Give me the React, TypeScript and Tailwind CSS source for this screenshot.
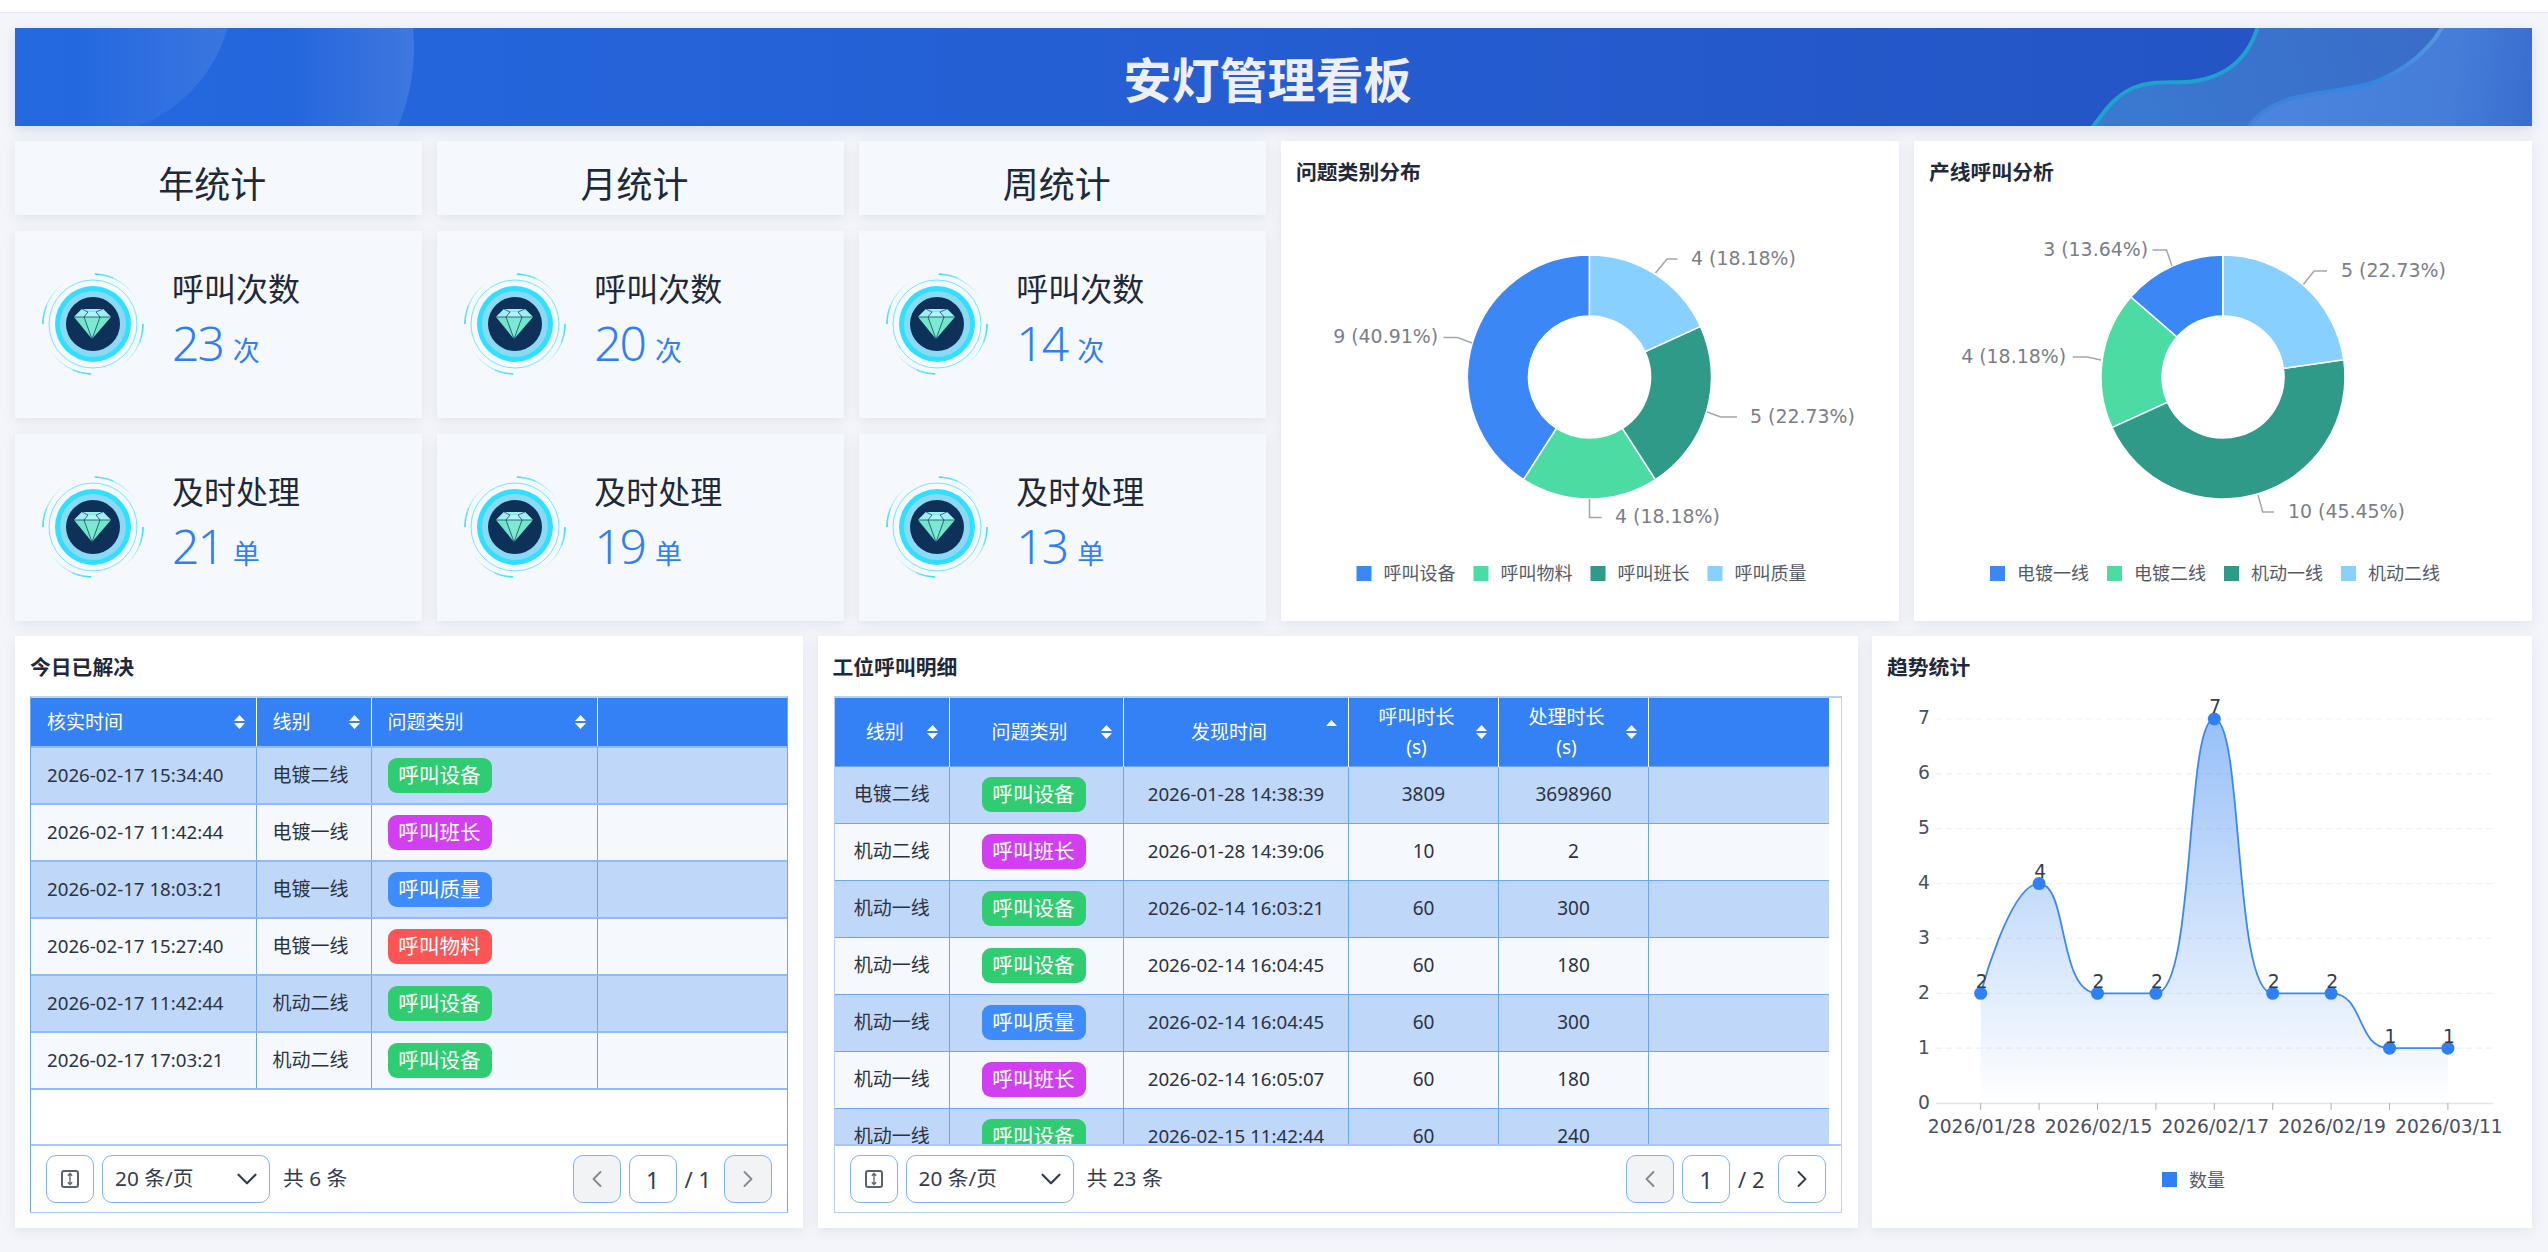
import React from 'react';
import { ChevronDown, ChevronLeft, ChevronRight } from 'lucide-react';

const CHART_FONT = '"DejaVu Sans", sans-serif';
const CJK_FONT = '"Noto Sans", "Noto Sans CJK SC", sans-serif';

type Tag = '呼叫设备' | '呼叫班长' | '呼叫质量' | '呼叫物料';

const TAG_COLORS: Record<Tag, string> = {
  呼叫设备: 'bg-[#2fcc71]',
  呼叫班长: 'bg-[#d13ff0]',
  呼叫质量: 'bg-[#3e8cfb]',
  呼叫物料: 'bg-[#fb5555]',
};

const SOLVED: [string, string, Tag][] = [
  ['2026-02-17 15:34:40', '电镀二线', '呼叫设备'],
  ['2026-02-17 11:42:44', '电镀一线', '呼叫班长'],
  ['2026-02-17 18:03:21', '电镀一线', '呼叫质量'],
  ['2026-02-17 15:27:40', '电镀一线', '呼叫物料'],
  ['2026-02-17 11:42:44', '机动二线', '呼叫设备'],
  ['2026-02-17 17:03:21', '机动二线', '呼叫设备'],
];

const CALLS: [string, Tag, string, number, number][] = [
  ['电镀二线', '呼叫设备', '2026-01-28 14:38:39', 3809, 3698960],
  ['机动二线', '呼叫班长', '2026-01-28 14:39:06', 10, 2],
  ['机动一线', '呼叫设备', '2026-02-14 16:03:21', 60, 300],
  ['机动一线', '呼叫设备', '2026-02-14 16:04:45', 60, 180],
  ['机动一线', '呼叫质量', '2026-02-14 16:04:45', 60, 300],
  ['机动一线', '呼叫班长', '2026-02-14 16:05:07', 60, 180],
  ['机动一线', '呼叫设备', '2026-02-15 11:42:44', 60, 240],
];

const STATS = [
  { title: '年统计', calls: 23, handled: 21 },
  { title: '月统计', calls: 20, handled: 19 },
  { title: '周统计', calls: 14, handled: 13 },
];

function polar(cx: number, cy: number, r: number, deg: number) {
  const a = ((deg - 90) * Math.PI) / 180;
  return [cx + r * Math.cos(a), cy + r * Math.sin(a)];
}

function arcPath(cx: number, cy: number, r: number, from: number, to: number) {
  const [x0, y0] = polar(cx, cy, r, from);
  const [x1, y1] = polar(cx, cy, r, to);
  return `M${x0} ${y0}A${r} ${r} 0 ${to - from > 180 ? 1 : 0} 1 ${x1} ${y1}`;
}

function DiamondBadge() {
  const sweeps = [2, 90, 182, 270];
  return (
    <svg viewBox="0 0 104 104" className="w-[104px] h-[104px] shrink-0">
      {sweeps.map((start) =>
        [0, 1, 2, 3, 4, 5, 6, 7, 8, 9].map((i) => (
          <path
            key={`${start}-${i}`}
            d={arcPath(52, 52, 50, start + i * 5.5, start + (i + 1) * 5.5)}
            fill="none"
            stroke="#35dcff"
            strokeWidth={i < 4 ? 1.6 : 1}
            opacity={1 - i * 0.1}
          />
        )),
      )}
      <circle cx="52" cy="52" r="44" fill="none" stroke="#35dcff" strokeWidth="0.7" />
      <circle cx="52" cy="52" r="38" fill="#2fe0ff" />
      <circle cx="52" cy="52" r="33" fill="#8bd9f3" />
      <circle cx="52" cy="52" r="27" fill="#0d3158" />
      <path d="M41 37H62L70 45L51 67L33 45Z" fill="#71e6c9" />
      <path d="M41 37H62L70 45H33Z" fill="#a0eef5" />
      <path d="M43 45L51 67L59 45L55 39H47Z" fill="#7ce9d3" />
      <path d="M47 40H55L59 45H43Z" fill="#aef5fb" />
      <path d="M33 45H70M41 37L47 40M62 37L55 40M43 45L51 67M59 45L51 67M47 40L43 45M55 40L59 45" fill="none" stroke="#0d3158" strokeWidth="0.7" />
    </svg>
  );
}

function StatCard({ label, value, unit }: { label: string; value: number; unit: string }) {
  return (
    <div className="bg-[#f5f9fe] shadow-[0_3px_12px_rgba(70,80,120,0.1)] flex items-center pl-[26px] gap-[27px]">
      <DiamondBadge />
      <div className="flex flex-col mb-[5px]">
        <div className="text-[32px] leading-[44px] text-[#1f2937]">{label}</div>
        <div className="flex items-baseline gap-[10px] text-[#2f7ff3] leading-[50px] mt-[7px]">
          <span className="text-[48px] font-light tracking-[-2px]">{value}</span>
          <span className="text-[27px]">{unit}</span>
        </div>
      </div>
    </div>
  );
}

type Slice = { value: number; color: string };
type PieLabel = { text: string; x: number; y: number; anchor: 'start' | 'end'; leader: string };

function Donut({ x, cx, slices, labels, legend }: { x: number; cx: number; slices: Slice[]; labels: PieLabel[]; legend: string[] }) {
  const cy = 377;
  const total = slices.reduce((s, d) => s + d.value, 0);
  let end = 360;
  const legendStart = cx - 233;
  return (
    <svg viewBox={`${x} 201 618 420`} className="w-[618px] h-[420px]">
      {slices.map((s) => {
        const start = end - (s.value / total) * 360;
        const [ax, ay] = polar(cx, cy, 122, start);
        const [bx, by] = polar(cx, cy, 122, end);
        const [ix, iy] = polar(cx, cy, 61, end);
        const [jx, jy] = polar(cx, cy, 61, start);
        const large = end - start > 180 ? 1 : 0;
        const d = `M${ax} ${ay}A122 122 0 ${large} 1 ${bx} ${by}L${ix} ${iy}A61 61 0 ${large} 0 ${jx} ${jy}Z`;
        end = start;
        return <path key={s.color} d={d} fill={s.color} stroke="#fff" strokeWidth="1.5" />;
      })}
      {labels.map((l) => (
        <g key={l.text + l.x}>
          <polyline points={l.leader} fill="none" stroke="#a3a6ad" strokeWidth="1.5" />
          <text x={l.x} y={l.y} textAnchor={l.anchor} dominantBaseline="central" fontSize="18.9" fill="#7b7e86" fontFamily={CHART_FONT}>
            {l.text}
          </text>
        </g>
      ))}
      {legend.map((name, i) => (
        <g key={name}>
          <rect x={legendStart + i * 117} y={566} width="15" height="15" fill={slices[i].color} />
          <text x={legendStart + i * 117 + 27} y={573} dominantBaseline="central" fontSize="18" fill="#555b66" fontFamily={CJK_FONT}>
            {name}
          </text>
        </g>
      ))}
    </svg>
  );
}

const VALUES = [2, 4, 2, 2, 7, 2, 2, 1, 1];
const STEP = 58.4;
const px = (i: number) => 1980.7 + i * STEP;
const py = (v: number) => 1103 - v * 54.86;

// echarts style smooth line, with the long handles off a flat run shortened to fit the picture
function smoothPath(pts: number[][]) {
  const clamp = (v: number, a: number, b: number) => Math.min(Math.max(a, b), Math.max(Math.min(a, b), v));
  const maxHandle = STEP * 0.68;
  const cps: number[][][] = pts.map((p, i) => {
    const prev = pts[i - 1] ?? p;
    const next = pts[i + 1] ?? p;
    const lenP = Math.hypot(p[0] - prev[0], p[1] - prev[1]);
    const lenN = Math.hypot(p[0] - next[0], p[1] - next[1]);
    if (!lenP || !lenN) return [p, p];
    let vx = (next[0] - prev[0]) * 0.5;
    let vy = (next[1] - prev[1]) * 0.5;
    const ratio = lenN / (lenP + lenN);
    let nx = clamp(p[0] + vx * ratio, p[0], next[0]);
    let ny = clamp(p[1] + vy * ratio, p[1], next[1]);
    vx = nx - p[0];
    vy = ny - p[1];
    let bx = clamp(p[0] - (vx * lenP) / lenN, p[0], prev[0]);
    const by = clamp(p[1] - (vy * lenP) / lenN, p[1], prev[1]);
    vx = p[0] - bx;
    vy = p[1] - by;
    nx = p[0] + (vx * lenN) / lenP;
    ny = p[1] + (vy * lenN) / lenP;
    nx = Math.min(nx, p[0] + maxHandle);
    bx = Math.max(bx, p[0] - maxHandle);
    return [[bx, by], [nx, ny]];
  });
  let d = `M${pts[0][0]} ${pts[0][1]}`;
  for (let i = 1; i < pts.length; i++) {
    d += `C${cps[i - 1][1][0]} ${cps[i - 1][1][1]} ${cps[i][0][0]} ${cps[i][0][1]} ${pts[i][0]} ${pts[i][1]}`;
  }
  return d;
}

function TrendChart() {
  const pts = VALUES.map((v, i) => [px(i), py(v)]);
  const line = smoothPath(pts);
  const xLabels: [number, string][] = [
    [0, '2026/01/28'],
    [2, '2026/02/15'],
    [4, '2026/02/17'],
    [6, '2026/02/19'],
    [8, '2026/03/11'],
  ];
  return (
    <svg viewBox="1872 696 660 532" className="w-[660px] h-[532px]">
      <defs>
        <linearGradient id="trendFill" x1="0" y1="0" x2="0" y2="1">
          <stop offset="0" stopColor="#2f80f2" stopOpacity="0.5" />
          <stop offset="1" stopColor="#2f80f2" stopOpacity="0" />
        </linearGradient>
      </defs>
      {[1, 2, 3, 4, 5, 6, 7].map((v) => (
        <line key={v} x1="1936" x2="2493" y1={py(v)} y2={py(v)} stroke="#eff1f4" strokeWidth="1.2" strokeDasharray="6 4" />
      ))}
      {[0, 1, 2, 3, 4, 5, 6, 7].map((v) => (
        <text key={v} x="1930" y={py(v) - 1} textAnchor="end" dominantBaseline="central" fontSize="18.7" fill="#4a505e" fontFamily={CHART_FONT}>
          {v}
        </text>
      ))}
      <path d={`${line}L${px(8)} 1103L${px(0)} 1103Z`} fill="url(#trendFill)" />
      <line x1="1936" x2="2493" y1="1103.5" y2="1103.5" stroke="#dfe3ec" strokeWidth="1.5" />
      {VALUES.map((_, i) => (
        <line key={i} x1={px(i)} x2={px(i)} y1="1103" y2="1110" stroke="#a9aeb9" strokeWidth="1" />
      ))}
      <path d={line} fill="none" stroke="#3b87f5" strokeWidth="1.8" />
      {pts.map((p, i) => (
        <g key={i}>
          <circle cx={p[0]} cy={p[1]} r="6.5" fill="#2f80f2" />
          <text x={p[0] + 1} y={p[1] - 12} textAnchor="middle" dominantBaseline="central" fontSize="18.7" fill="#333c4b" fontFamily={CHART_FONT}>
            {VALUES[i]}
          </text>
        </g>
      ))}
      {xLabels.map(([i, t]) => (
        <text key={t} x={px(i) + 1} y="1126" textAnchor="middle" dominantBaseline="central" fontSize="18.7" fill="#4a505e" fontFamily={CHART_FONT}>
          {t}
        </text>
      ))}
      <rect x="2162" y="1172" width="15" height="15" fill="#2f80f2" />
      <text x="2189" y="1180" dominantBaseline="central" fontSize="18" fill="#555b66" fontFamily={CJK_FONT}>
        数量
      </text>
    </svg>
  );
}

function SortIcon({ upOnly }: { upOnly?: boolean }) {
  return (
    <svg viewBox="0 0 11 14" className="w-[11px] h-[14px] shrink-0 fill-white">
      <path d="M5.5 0L11 6H0Z" />
      {!upOnly && <path d="M5.5 14L0 8H11Z" />}
    </svg>
  );
}

function TagBadge({ tag }: { tag: Tag }) {
  return (
    <span className={`${TAG_COLORS[tag]} inline-block w-[104px] h-[35px] leading-[35px] rounded-[9px] text-center text-white text-[20.6px]`}>
      {tag}
    </span>
  );
}

function Pager({ total, pages, nextEnabled }: { total: number; pages: number; nextEnabled?: boolean }) {
  const btn = 'w-[48px] h-[48px] rounded-[10px] border border-[#7fb0f6] flex items-center justify-center';
  return (
    <div className="h-[68px] shrink-0 border-t-2 border-[#a5c8fa] flex items-center px-[15px] text-[20.8px] text-[#333c4b]">
      <div className={btn}>
        <svg viewBox="0 0 18 18" className="w-[18px] h-[18px]" fill="none" stroke="#5b616c" strokeWidth="2">
          <rect x="1" y="1" width="16" height="16" rx="2" />
          <path d="M9 3.5V14.5M6.8 5.7L9 3.5L11.2 5.7M6.8 12.3L9 14.5L11.2 12.3" strokeWidth="1.3" />
        </svg>
      </div>
      <div className="w-[168px] h-[48px] ml-[8px] rounded-[10px] border border-[#7fb0f6] flex items-center justify-between pl-[12px] pr-[5px]">
        <span>20 条/页</span>
        <ChevronDown className="w-[34px] h-[34px] text-[#333c4b]" strokeWidth={1.5} />
      </div>
      <span className="ml-[13px]">共 {total} 条</span>
      <div className="ml-auto flex items-center">
        <div className={`${btn} bg-[#f2f3f5] text-[#84888f]`}>
          <ChevronLeft className="w-[28px] h-[28px]" strokeWidth={1.6} />
        </div>
        <div className={`${btn} ml-[8px] pt-[2px] text-[23px]`}>1</div>
        <span className="ml-[8px] mr-[13px] whitespace-nowrap text-[22px]">/ {pages}</span>
        <div className={`${btn} ${nextEnabled ? 'text-[#333c4b]' : 'bg-[#f2f3f5] text-[#84888f]'}`}>
          <ChevronRight className="w-[28px] h-[28px]" strokeWidth={1.6} />
        </div>
      </div>
    </div>
  );
}

function Panel({ title, children, className }: { title: string; children: React.ReactNode; className?: string }) {
  return (
    <div className={`bg-white shadow-[0_3px_12px_rgba(70,80,120,0.1)] flex flex-col min-h-0 ${className ?? ''}`}>
      <div className="h-[60px] shrink-0 px-[15px] pt-[3px] flex items-center text-[20.8px] font-bold text-[#1f2937]">{title}</div>
      {children}
    </div>
  );
}

export default function App() {
  return (
    <div className="h-screen overflow-hidden bg-[#f3f5fa] flex flex-col" style={{ fontFamily: CJK_FONT }}>
      <div className="h-[13px] shrink-0 bg-white border-b border-[#e6e8ee]" />
      <div className="flex-1 min-h-0 flex flex-col pl-[15px] pr-[16px] pt-[15px] pb-[24px]">
        <header className="relative h-[98px] shrink-0 overflow-hidden bg-gradient-to-r from-[#2469e0] to-[#2452c2] shadow-[0_4px_12px_rgba(70,80,120,0.15)] flex items-center justify-center pr-[12px] pt-[6px]">
          <svg viewBox="0 0 2517 98" className="absolute inset-0 w-full h-full">
            <defs>
              <linearGradient id="bubbleA" gradientUnits="userSpaceOnUse" x1="60" y1="0" x2="215" y2="0">
                <stop offset="0" stopColor="#fff" stopOpacity="0" />
                <stop offset="1" stopColor="#fff" stopOpacity="0.1" />
              </linearGradient>
              <linearGradient id="bubbleB" gradientUnits="userSpaceOnUse" x1="275" y1="0" x2="400" y2="0">
                <stop offset="0" stopColor="#fff" stopOpacity="0" />
                <stop offset="1" stopColor="#fff" stopOpacity="0.12" />
              </linearGradient>
              <linearGradient id="waveA" gradientUnits="userSpaceOnUse" x1="2080" y1="98" x2="2400" y2="0">
                <stop offset="0" stopColor="#3b7ad0" />
                <stop offset="1" stopColor="#396dc9" />
              </linearGradient>
              <linearGradient id="waveB" gradientUnits="userSpaceOnUse" x1="2240" y1="60" x2="2517" y2="98">
                <stop offset="0" stopColor="#4b86de" />
                <stop offset="0.7" stopColor="#457dd9" />
                <stop offset="1" stopColor="#3a6ccf" />
              </linearGradient>
              <linearGradient id="waveBEdge" gradientUnits="userSpaceOnUse" x1="2233" y1="98" x2="2428" y2="0">
                <stop offset="0" stopColor="#4580db" />
                <stop offset="0.6" stopColor="#2f88e0" />
                <stop offset="1" stopColor="#5c97e0" />
              </linearGradient>
            </defs>
            <circle cx="70" cy="-40" r="148" fill="url(#bubbleA)" />
            <circle cx="195" cy="19" r="204" fill="url(#bubbleB)" />
            <path d="M2243 -2C2232 35 2205 52 2170 54C2150 55 2135 53 2118 60C2100 68 2090 82 2077 100H2519V-2Z" fill="url(#waveA)" stroke="#1ea3cc" strokeWidth="4" />
            <path d="M2428 -2C2410 30 2375 52 2345 58C2320 63 2295 66 2278 70C2258 76 2242 86 2233 100H2519V-2Z" fill="url(#waveB)" stroke="url(#waveBEdge)" strokeWidth="4" />
          </svg>
          <h1 className="relative text-[48px] font-bold text-[#eeeff5] leading-none">安灯管理看板</h1>
        </header>

        <div className="h-[480px] mt-[15px] shrink-0 grid grid-cols-[1251px_1fr_1fr] gap-x-[15px]">
          <div className="grid grid-cols-3 grid-rows-[74px_187.5px_187.5px] gap-x-[15.5px] gap-y-[15.5px]">
            {STATS.map((s) => (
              <div key={s.title} className="bg-[#f5f9fe] shadow-[0_3px_12px_rgba(70,80,120,0.1)] flex items-center justify-center pr-[12px] pt-[13px] text-[36px] text-[#1f2937]">
                {s.title}
              </div>
            ))}
            {STATS.map((s) => (
              <StatCard key={s.title} label="呼叫次数" value={s.calls} unit="次" />
            ))}
            {STATS.map((s) => (
              <StatCard key={s.title} label="及时处理" value={s.handled} unit="单" />
            ))}
          </div>
          <Panel title="问题类别分布">
            <Donut
              x={1281}
              cx={1589.5}
              slices={[
                { value: 9, color: '#3b87f5' },
                { value: 4, color: '#4cdca3' },
                { value: 5, color: '#2f9a87' },
                { value: 4, color: '#87d0ff' },
              ]}
              legend={['呼叫设备', '呼叫物料', '呼叫班长', '呼叫质量']}
              labels={[
                { text: '4 (18.18%)', x: 1691, y: 258, anchor: 'start', leader: '1655.5,273 1667,259 1677.5,259' },
                { text: '5 (22.73%)', x: 1750, y: 416, anchor: 'start', leader: '1707,412 1720.7,417 1737,417' },
                { text: '4 (18.18%)', x: 1615, y: 516, anchor: 'start', leader: '1589.5,499 1589.5,517.5 1601.7,517.5' },
                { text: '9 (40.91%)', x: 1438, y: 336, anchor: 'end', leader: '1443.6,337.5 1457.5,337.5 1472,343' },
              ]}
            />
          </Panel>
          <Panel title="产线呼叫分析">
            <Donut
              x={1914}
              cx={2223}
              slices={[
                { value: 3, color: '#3b87f5' },
                { value: 4, color: '#4cdca3' },
                { value: 10, color: '#2f9a87' },
                { value: 5, color: '#87d0ff' },
              ]}
              legend={['电镀一线', '电镀二线', '机动一线', '机动二线']}
              labels={[
                { text: '3 (13.64%)', x: 2148, y: 249, anchor: 'end', leader: '2152.6,250 2166.5,250 2172,266' },
                { text: '5 (22.73%)', x: 2341, y: 270, anchor: 'start', leader: '2303.4,284.5 2314,271 2327,271' },
                { text: '4 (18.18%)', x: 2066, y: 356, anchor: 'end', leader: '2072.8,357 2087.5,357 2101,360' },
                { text: '10 (45.45%)', x: 2288, y: 511, anchor: 'start', leader: '2258,495 2262.7,512 2274,512' },
              ]}
            />
          </Panel>
        </div>

        <div className="flex-1 min-h-0 mt-[15px] grid grid-cols-[788px_1040px_660px] gap-x-[14.5px]">
          <Panel title="今日已解决">
            <div className="mx-[15px] mb-[15px] flex-1 min-h-0 flex flex-col border-x border-b border-t-2 border-x-[#6ea6f6] border-b-[#a5c8fa] border-t-[#bcd4f9]">
              <div className="flex-1 min-h-0">
                <table className="w-full table-fixed">
                  <thead>
                    <tr className="bg-[#3381f5] text-white text-[19px] font-normal h-[49px]">
                      <th className="w-[225px] font-normal border-r border-white pl-[16px] pr-[11px]">
                        <div className="flex items-center justify-between"><span>核实时间</span><SortIcon /></div>
                      </th>
                      <th className="w-[115px] font-normal border-r border-white pl-[16px] pr-[11px]">
                        <div className="flex items-center justify-between"><span>线别</span><SortIcon /></div>
                      </th>
                      <th className="w-[226px] font-normal border-r border-white pl-[16px] pr-[11px]">
                        <div className="flex items-center justify-between"><span>问题类别</span><SortIcon /></div>
                      </th>
                      <th className="font-normal" />
                    </tr>
                  </thead>
                  <tbody className="text-[19px] text-[#2b3340]">
                    {SOLVED.map((r, i) => (
                      <tr key={i} className={`${i % 2 === 0 ? 'bg-[#bfd7f9]' : 'bg-[#f5f9fe]'} border-y-2 border-[#8fbaf8]`}>
                        <td className="h-[57px] pl-[16px] border-r border-[#6ea6f6] text-[18.7px] whitespace-nowrap">{r[0]}</td>
                        <td className="pl-[16px] border-r border-[#6ea6f6]">{r[1]}</td>
                        <td className="pl-[16px] border-r border-[#6ea6f6]"><TagBadge tag={r[2]} /></td>
                        <td />
                      </tr>
                    ))}
                  </tbody>
                </table>
              </div>
              <Pager total={6} pages={1} />
            </div>
          </Panel>

          <Panel title="工位呼叫明细">
            <div className="mx-[16px] mb-[15px] flex-1 min-h-0 flex flex-col border border-t-2 border-[#b5d0f9]">
              <div className="flex-1 min-h-0 overflow-hidden pr-[12px]">
                <table className="w-full table-fixed">
                  <thead>
                    <tr className="bg-[#3381f5] text-white text-[19px] h-[68px] leading-[30px] text-center">
                      <th className="w-[115px] font-normal border-r border-white pl-[8px] pr-[11px]">
                        <div className="flex items-center"><span className="flex-1">线别</span><SortIcon /></div>
                      </th>
                      <th className="w-[174px] font-normal border-r border-white pl-[8px] pr-[11px]">
                        <div className="flex items-center"><span className="flex-1">问题类别</span><SortIcon /></div>
                      </th>
                      <th className="w-[225px] font-normal border-r border-white pl-[8px] pr-[11px]">
                        <div className="flex items-center"><span className="flex-1">发现时间</span><span className="-mt-[10px]"><SortIcon upOnly /></span></div>
                      </th>
                      <th className="w-[150px] font-normal border-r border-white pl-[8px] pr-[11px]">
                        <div className="flex items-center"><span className="flex-1">呼叫时长<br />(s)</span><SortIcon /></div>
                      </th>
                      <th className="w-[150px] font-normal border-r border-white pl-[8px] pr-[11px]">
                        <div className="flex items-center"><span className="flex-1">处理时长<br />(s)</span><SortIcon /></div>
                      </th>
                      <th className="font-normal" />
                    </tr>
                  </thead>
                  <tbody className="text-[19px] text-[#2b3340] text-center">
                    {CALLS.map((r, i) => (
                      <tr key={i} className={`${i % 2 === 0 ? 'bg-[#bfd7f9]' : 'bg-[#f5f9fe]'} border-y border-[#6ea6f6]`}>
                        <td className="h-[57px] border-r border-[#6ea6f6]">{r[0]}</td>
                        <td className="border-r border-[#6ea6f6] pr-[6px]"><TagBadge tag={r[1]} /></td>
                        <td className="border-r border-[#6ea6f6] text-[18.7px] whitespace-nowrap">{r[2]}</td>
                        <td className="border-r border-[#6ea6f6]">{r[3]}</td>
                        <td className="border-r border-[#6ea6f6]">{r[4]}</td>
                        <td />
                      </tr>
                    ))}
                  </tbody>
                </table>
              </div>
              <Pager total={23} pages={2} nextEnabled />
            </div>
          </Panel>

          <Panel title="趋势统计">
            <TrendChart />
          </Panel>
        </div>
      </div>
    </div>
  );
}
